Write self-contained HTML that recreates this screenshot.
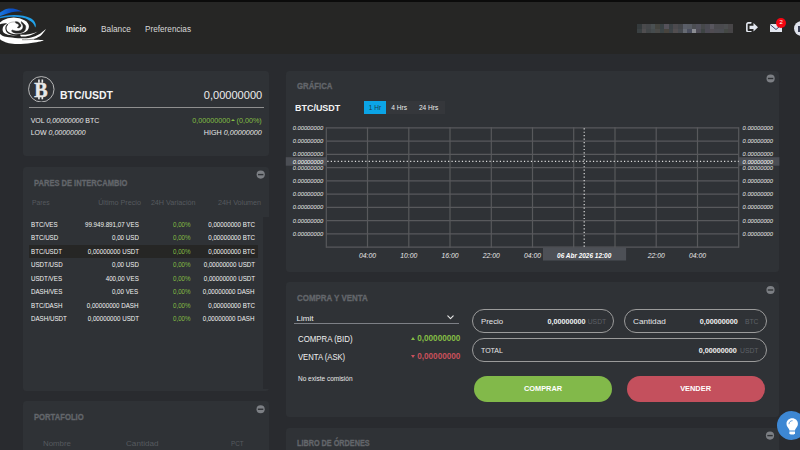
<!DOCTYPE html>
<html lang="es">
<head>
<meta charset="utf-8">
<title>Exchange</title>
<style>
*{box-sizing:border-box;margin:0;padding:0}
html,body{width:800px;height:450px;overflow:hidden;background:#292b2f}
body{position:relative;font-family:"Liberation Sans",sans-serif;color:#f0f0f0;-webkit-font-smoothing:antialiased}
.abs,.t{position:absolute}
.t{white-space:nowrap;line-height:10px;font-size:7px}
.topbar{left:0;top:0;width:800px;height:2px;background:#0b0b0b}
.header{left:0;top:2px;width:800px;height:52px;background:#262625}
.card{background:#2f3236;border-radius:3.5px}
.ttl{font-weight:bold;color:#63666b;font-size:8.8px;transform-origin:left center;-webkit-text-stroke:.3px #63666b}
.minus{width:8px;height:8px;border-radius:50%;background:#787b80;margin:0 0 0 -.2px}
.minus:after{content:"";position:absolute;left:1.3px;top:3.3px;width:5.4px;height:1.4px;background:#383b40}
.th{color:#565a5f;font-size:7.2px}
.row{font-size:6.9px;color:#f2f2f2;transform:scaleX(.9)}
.ol{transform-origin:left center}
.or{transform-origin:right center}
.pill{border:1px solid #9b9b9b;border-radius:12px}
.btn{border-radius:13px}
.g{color:#84be45}
.r{color:#c9505b}
.i{font-style:italic}
.b{font-weight:bold}
</style>
</head>
<body>
<div class="abs topbar"></div>
<div class="abs header"></div>


<!-- LOGO -->
<svg class="abs" style="left:0;top:4px" width="60" height="46" viewBox="0 0 60 46">
  <defs>
    <linearGradient id="gb1" x1="0" y1="0" x2="1" y2="0"><stop offset="0" stop-color="#1877e0"/><stop offset=".5" stop-color="#0b50c4"/><stop offset="1" stop-color="#0a48b8"/></linearGradient>
    <linearGradient id="gb2" x1="0" y1="0" x2="1" y2="0"><stop offset="0" stop-color="#1688dc"/><stop offset="1" stop-color="#22a6ee"/></linearGradient>
  </defs>
  <path d="M0 8.500 C1.500 7.300 2.600 6.700 3.600 6.200 C5.400 5.200 7 4.700 8.900 4.500 C11 4.300 13 4.400 15.100 4.900 C17.800 5.500 20.400 6.500 22.600 8 C20.800 7.600 19.300 7.500 17.800 7.500 C15.600 7.500 13.600 7.800 11.600 8.300 C9.400 8.800 7.300 9.500 5.300 10.300 C3.400 11 1.600 11.600 0 12.100 Z" fill="url(#gb1)"/>
  <path d="M0 12.700 C1.800 12.300 3.500 12 5.300 11.700 C8.200 11.200 11.200 10.900 14.200 10.900 C17.200 10.900 20.200 11.100 23.100 11.700 C25.700 12.200 28.100 12.900 30.200 14 C32.200 15 33.700 16.300 34.700 17.900 C35.500 19.200 35.900 20.600 35.800 22 C35.700 22.600 35.500 23.100 35.100 23.400 C34.900 22.500 34.600 21.700 34.200 20.900 C33.500 19.600 32.400 18.500 31.100 17.600 C29.500 16.500 27.700 15.300 25.800 14.500 C23.300 13.500 20.600 13.100 17.800 12.900 C14.800 12.700 11.800 12.700 8.900 12.900 C5.900 13.100 2.900 13.500 0 14.200 Z" fill="url(#gb2)"/>
  <ellipse cx="13.700" cy="22.500" rx="15.200" ry="8.900" fill="#fff"/>
  <path d="M-1.00 20.40 C0.28 20.23 5.90 19.17 6.70 19.40 C7.50 19.63 4.48 20.87 3.80 21.80 C3.12 22.73 2.67 23.92 2.60 25.00 C2.53 26.08 2.67 27.30 3.40 28.30 C4.13 29.30 5.23 30.28 7.00 31.00 C8.77 31.72 11.50 32.37 14.00 32.60 C16.50 32.83 19.25 32.80 22.00 32.40 C24.75 32.00 29.08 30.57 30.50 30.20 L30.60 30.60 C29.33 31.02 25.60 32.58 23.00 33.10 C20.40 33.62 17.50 33.70 15.00 33.70 C12.50 33.70 10.00 33.43 8.00 33.10 C6.00 32.77 4.50 32.35 3.00 31.70 C1.50 31.05 -0.33 30.32 -1.00 29.20 C-1.67 28.08 -1.00 26.47 -1.00 25.00 C-1.00 23.53 -1.00 21.17 -1.00 20.40 Z" fill="#262625"/>
  <path d="M21.30 17.50 C21.93 18.10 24.38 19.97 25.10 21.10 C25.82 22.23 25.82 23.20 25.60 24.30 C25.38 25.40 24.95 26.87 23.80 27.70 C22.65 28.53 20.35 29.13 18.70 29.30 C17.05 29.47 15.12 29.10 13.90 28.70 C12.68 28.30 11.82 27.20 11.40 26.90 L12.30 26.00 C12.92 26.17 14.67 26.93 16.00 27.00 C17.33 27.07 19.18 26.85 20.30 26.40 C21.42 25.95 22.27 25.10 22.70 24.30 C23.13 23.50 23.13 22.47 22.90 21.60 C22.67 20.73 21.57 19.52 21.30 19.10 Z" fill="#262625" stroke="#262625" stroke-width=".45" stroke-linejoin="round"/>
  <path d="M15.60 17.50 C16.12 17.65 17.83 17.85 18.70 18.40 C19.57 18.95 20.48 20.07 20.80 20.80 C21.12 21.53 20.92 22.28 20.60 22.80 C20.28 23.32 19.47 23.78 18.90 23.90 C18.33 24.02 17.48 23.57 17.20 23.50 L17.20 23.50 C17.37 23.37 17.92 23.02 18.20 22.70 C18.48 22.38 18.92 22.05 18.90 21.60 C18.88 21.15 18.65 20.45 18.10 20.00 C17.55 19.55 16.02 19.08 15.60 18.90 Z" fill="#262625" stroke="#262625" stroke-width=".45" stroke-linejoin="round"/>
  <path d="M7.400 20.600 C6.300 21.700 5.800 23 5.900 24.300 C6 25.500 6.300 26.600 6.900 27.500 C7.800 28.600 9.200 29.400 10.700 29.900 C12.400 30.500 14.200 30.800 16 30.800 C18.200 30.800 20.400 30.600 22.400 29.900 C24 29.400 25.500 28.800 26.700 28" fill="none" stroke="#262625" stroke-width="1.200" stroke-linecap="round"/>
  <path d="M15.600 18 C13.800 17.800 12.200 17.900 10.700 18.400 C9.300 18.900 8.200 19.700 7.400 20.600" fill="none" stroke="#262625" stroke-width=".5" stroke-opacity=".6"/>
  <path d="M0.00 30.00 C0.50 30.32 1.52 31.35 3.00 31.90 C4.48 32.45 6.90 32.97 8.90 33.30 C10.90 33.63 12.78 33.73 15.00 33.90 C17.22 34.07 19.52 34.38 22.20 34.30 C24.88 34.22 28.28 34.08 31.10 33.40 C33.92 32.72 36.57 31.65 39.10 30.20 C41.63 28.75 45.10 25.62 46.30 24.70 L46.30 24.70 C45.40 25.82 42.98 29.62 40.90 31.40 C38.82 33.18 34.45 34.68 33.80 35.40 C33.15 36.12 35.37 35.53 37.00 35.70 C38.63 35.87 44.58 35.85 43.60 36.40 C42.62 36.95 35.40 38.40 31.10 39.00 C26.80 39.60 21.50 39.97 17.80 40.00 C14.10 40.03 11.42 39.70 8.90 39.20 C6.38 38.70 4.18 37.67 2.70 37.00 C1.22 36.33 0.45 35.50 0.00 35.20 Z" fill="#fff"/>
  <path d="M20 30.800 C27 30.900 33 29.700 37.800 27.400 C33 31 27 32.600 21 32.600 Z" fill="#fff"/>
  <path d="M22 35.700 C28 35.900 35 35.300 38.500 34.600" fill="none" stroke="#262625" stroke-width=".5"/>
</svg>

<!-- HEADER RIGHT -->
<svg class="abs" style="left:637.2px;top:24.2px" width="95.7" height="9.2" viewBox="0 0 95.7 9.2" shape-rendering="crispEdges">
  <g><rect x="0.00" y="0.0" width="4.61" height="4.650" fill="#343a3c"/><rect x="4.56" y="0.0" width="4.61" height="4.650" fill="#4a4a4c"/><rect x="9.11" y="0.0" width="4.61" height="4.650" fill="#45474a"/><rect x="13.67" y="0.0" width="4.61" height="4.650" fill="#4a5052"/><rect x="18.23" y="0.0" width="4.61" height="4.650" fill="#44443f"/><rect x="22.79" y="0.0" width="4.61" height="4.650" fill="#3a4244"/><rect x="27.34" y="0.0" width="4.61" height="4.650" fill="#55525a"/><rect x="31.90" y="0.0" width="4.61" height="4.650" fill="#3c4246"/><rect x="36.46" y="0.0" width="4.61" height="4.650" fill="#4c4a4e"/><rect x="41.01" y="0.0" width="4.61" height="4.650" fill="#44464a"/><rect x="45.57" y="0.0" width="4.61" height="4.650" fill="#5a5e68"/><rect x="50.13" y="0.0" width="4.61" height="4.650" fill="#585c64"/><rect x="54.69" y="0.0" width="4.61" height="4.650" fill="#4c4e52"/><rect x="59.24" y="0.0" width="4.61" height="4.650" fill="#50505a"/><rect x="63.80" y="0.0" width="4.61" height="4.650" fill="#46484a"/><rect x="68.36" y="0.0" width="4.61" height="4.650" fill="#4a4a52"/><rect x="72.91" y="0.0" width="4.61" height="4.650" fill="#58565e"/><rect x="77.47" y="0.0" width="4.61" height="4.650" fill="#4a4a4e"/><rect x="82.03" y="0.0" width="4.61" height="4.650" fill="#4a4a4e"/><rect x="86.59" y="0.0" width="4.61" height="4.650" fill="#4c4e50"/><rect x="91.14" y="0.0" width="4.61" height="4.650" fill="#484648"/><rect x="0.00" y="4.6" width="4.61" height="4.650" fill="#3a4042"/><rect x="4.56" y="4.6" width="4.61" height="4.650" fill="#504e50"/><rect x="9.11" y="4.6" width="4.61" height="4.650" fill="#424648"/><rect x="13.67" y="4.6" width="4.61" height="4.650" fill="#464c4e"/><rect x="18.23" y="4.6" width="4.61" height="4.650" fill="#4a4a48"/><rect x="22.79" y="4.6" width="4.61" height="4.650" fill="#3c4446"/><rect x="27.34" y="4.6" width="4.61" height="4.650" fill="#48443e"/><rect x="31.90" y="4.6" width="4.61" height="4.650" fill="#3e4448"/><rect x="36.46" y="4.6" width="4.61" height="4.650" fill="#524e50"/><rect x="41.01" y="4.6" width="4.61" height="4.650" fill="#464a50"/><rect x="45.57" y="4.6" width="4.61" height="4.650" fill="#666a72"/><rect x="50.13" y="4.6" width="4.61" height="4.650" fill="#4a4e5e"/><rect x="54.69" y="4.6" width="4.61" height="4.650" fill="#8a8c92"/><rect x="59.24" y="4.6" width="4.61" height="4.650" fill="#4e4c56"/><rect x="63.80" y="4.6" width="4.61" height="4.650" fill="#3e4444"/><rect x="68.36" y="4.6" width="4.61" height="4.650" fill="#4c4a54"/><rect x="72.91" y="4.6" width="4.61" height="4.650" fill="#504c52"/><rect x="77.47" y="4.6" width="4.61" height="4.650" fill="#4c4c52"/><rect x="82.03" y="4.6" width="4.61" height="4.650" fill="#4a4c52"/><rect x="86.59" y="4.6" width="4.61" height="4.650" fill="#444844"/><rect x="91.14" y="4.6" width="4.61" height="4.650" fill="#464446"/></g>
</svg>
<svg class="abs" style="left:745.8px;top:21.9px" width="12.2" height="10.6" viewBox="0 0 12.200 10.600">
  <path d="M4.900 0.850 H2.300 C1.400 0.850 0.850 1.400 0.850 2.300 V8.300 C0.850 9.200 1.400 9.750 2.300 9.750 H4.900" fill="none" stroke="#e3e7ef" stroke-width="1.600" stroke-linecap="round"/>
  <path d="M3.500 3.700 H7.500 V1 L12 5.300 L7.500 9.600 V6.900 H3.500 Z" fill="#e3e7ef"/>
</svg>
<svg class="abs" style="left:769.6px;top:23.6px" width="12" height="8.8" viewBox="0 0 12 8.800">
  <rect x="0" y="0" width="12" height="8.800" rx="1" fill="#e3e7ef"/>
  <path d="M0.300 0.700 L6 5.500 L11.700 0.700" fill="none" stroke="#2a2f5a" stroke-width="0.900"/>
</svg>
<div class="abs" style="left:776.2px;top:18.100px;width:9.800px;height:9.800px;border-radius:50%;background:#f40612"></div>
<div class="t" style="left:776.2px;top:18.100px;width:9.800px;line-height:9.800px;text-align:center;font-size:6px;color:#fff">2</div>
<div class="abs" style="left:794.2px;top:20.700px;width:15px;height:15px;border-radius:50%;background:#dfe3ec"></div>
<div class="abs" style="left:798.4px;top:25.500px;width:3px;height:6px;background:#3a3f55"></div>

<!-- NAV -->
<div class="t b ol" style="left:65.5px;top:23.8px;font-size:8.3px;color:#e4e4e4;transform:scaleX(.94)">Inicio</div>
<div class="t ol" style="left:101px;top:23.8px;font-size:8.3px;color:#d8d8d8">Balance</div>
<div class="t ol" style="left:144.5px;top:23.8px;font-size:8.3px;color:#d8d8d8;transform:scaleX(.988)">Preferencias</div>

<!-- CARDS -->
<div class="abs card" id="c1" style="left:22.5px;top:70.9px;width:246.5px;height:85px"></div>
<div class="abs card" id="c2" style="left:22.5px;top:167.3px;width:246.5px;height:223.5px"></div>
<div class="abs card" id="c3" style="left:22.5px;top:401px;width:246.5px;height:60px"></div>
<div class="abs card" id="c4" style="left:285.8px;top:70.9px;width:493.6px;height:201.6px"></div>
<div class="abs card" id="c5" style="left:285.8px;top:282.3px;width:493.6px;height:134.6px"></div>
<div class="abs card" id="c6" style="left:285.8px;top:427.6px;width:493.6px;height:40px"></div>


<!-- CARD 1: BTC/USDT -->
<svg class="abs" style="left:28.300px;top:75.900px" width="26.600" height="26.600" viewBox="0 0 26 26">
  <circle cx="13" cy="13" r="12.450" fill="none" stroke="#d4d4d4" stroke-width="0.800"/>
  <text x="12.600" y="20.300" text-anchor="middle" font-family="Liberation Serif, serif" font-weight="bold" font-size="19.500" fill="#e8e8e8" stroke="#e8e8e8" stroke-width=".5">B</text>
  <rect x="9.900" y="3.400" width="1.600" height="3.200" fill="#e8e8e8"/><rect x="13.200" y="3.400" width="1.600" height="3.200" fill="#e8e8e8"/>
  <rect x="9.900" y="19.800" width="1.600" height="3" fill="#e8e8e8"/><rect x="13.200" y="19.800" width="1.600" height="3" fill="#e8e8e8"/>
</svg>
<div class="t b" style="left:60.100px;top:88.800px;line-height:12px;font-size:11.200px;color:#f4f4f4;transform:scaleX(.937);transform-origin:left center">BTC/USDT</div>
<div class="t" style="right:538px;top:88.800px;line-height:12px;font-size:11.400px;color:#ececec;transform:scaleX(.97);transform-origin:right center">0,00000000</div>
<div class="abs" style="left:28.800px;top:107.300px;width:235px;height:1px;background:#8f8f8f"></div>
<div class="t" style="left:30.700px;top:115.800px;font-size:7px;color:#e8e8e8">VOL <span class="i">0,00000000</span> BTC</div>
<div class="t" style="left:30.700px;top:127.500px;font-size:7px;color:#e8e8e8">LOW <span class="i">0,00000000</span></div>
<div class="t g" style="right:538.300px;top:115.800px;font-size:7.200px">0,00000000<span style="display:inline-block;width:6.400px"></span>(0,00%)</div>
<div class="abs" style="left:231.400px;top:119.300px;border-left:2.200px solid transparent;border-right:2.200px solid transparent;border-bottom:2.800px solid #84be45"></div>
<div class="t" style="right:538.300px;top:127.500px;font-size:7.200px;color:#e8e8e8">HIGH <span class="i">0,00000000</span></div>

<!-- CARD 2: PARES -->
<div class="t ttl" style="left:34px;top:177.500px;transform:scaleX(0.858)">PARES DE INTERCAMBIO</div>
<div class="abs" style="left:263.400px;top:217px;width:5.600px;height:172px;background:#292b2f"></div>
<div class="t th ol" style="left:31.700px;top:197.800px;transform:scaleX(.935)">Pares</div>
<div class="t th" style="right:659.100px;top:197.800px">Último Precio</div>
<div class="t th" style="right:604.500px;top:197.800px">24H Variación</div>
<div class="t th" style="right:538.900px;top:197.800px">24H Volumen</div>
<div class="abs" style="left:28.800px;top:244.500px;width:229.200px;height:13px;background:#262625"></div>
<div class="t row ol" style="left:31.400px;top:219.7px">BTC/VES</div><div class="t row or" style="right:661.400px;top:219.7px">99.949.891,07 VES</div><div class="t row g ol" style="left:173.400px;top:219.7px">0,00%</div><div class="t row or" style="right:545.400px;top:219.7px">0,00000000 BTC</div>
<div class="t row ol" style="left:31.400px;top:233.2px">BTC/USD</div><div class="t row or" style="right:661.400px;top:233.2px">0,00 USD</div><div class="t row g ol" style="left:173.400px;top:233.2px">0,00%</div><div class="t row or" style="right:545.400px;top:233.2px">0,00000000 BTC</div>
<div class="t row ol" style="left:31.400px;top:246.7px">BTC/USDT</div><div class="t row or" style="right:661.400px;top:246.7px">0,00000000 USDT</div><div class="t row g ol" style="left:173.400px;top:246.7px">0,00%</div><div class="t row or" style="right:545.400px;top:246.7px">0,00000000 BTC</div>
<div class="t row ol" style="left:31.400px;top:260.2px">USDT/USD</div><div class="t row or" style="right:661.400px;top:260.2px">0,00 USD</div><div class="t row g ol" style="left:173.400px;top:260.2px">0,00%</div><div class="t row or" style="right:545.400px;top:260.2px">0,00000000 USDT</div>
<div class="t row ol" style="left:31.400px;top:273.7px">USDT/VES</div><div class="t row or" style="right:661.400px;top:273.7px">400,00 VES</div><div class="t row g ol" style="left:173.400px;top:273.7px">0,00%</div><div class="t row or" style="right:545.400px;top:273.7px">0,00000000 USDT</div>
<div class="t row ol" style="left:31.400px;top:287.2px">DASH/VES</div><div class="t row or" style="right:661.400px;top:287.2px">0,00 VES</div><div class="t row g ol" style="left:173.400px;top:287.2px">0,00%</div><div class="t row or" style="right:545.400px;top:287.2px">0,00000000 DASH</div>
<div class="t row ol" style="left:31.400px;top:300.7px">BTC/DASH</div><div class="t row or" style="right:661.400px;top:300.7px">0,00000000 DASH</div><div class="t row g ol" style="left:173.400px;top:300.7px">0,00%</div><div class="t row or" style="right:545.400px;top:300.7px">0,00000000 BTC</div>
<div class="t row ol" style="left:31.400px;top:314.2px">DASH/USDT</div><div class="t row or" style="right:661.400px;top:314.2px">0,00000000 USDT</div><div class="t row g ol" style="left:173.400px;top:314.2px">0,00%</div><div class="t row or" style="right:545.400px;top:314.2px">0,00000000 DASH</div>

<!-- CARD 3: PORTAFOLIO -->
<div class="t ttl" style="left:33.8px;top:411.600px;transform:scaleX(0.872)">PORTAFOLIO</div>
<div class="t th ol" style="left:42.500px;top:438.500px;transform:scaleX(1.094)">Nombre</div>
<div class="t th ol" style="left:125.900px;top:438.500px;transform:scaleX(1.13)">Cantidad</div>
<div class="t th ol" style="left:231.200px;top:438.500px;transform:scaleX(.875)">PCT</div>


<!-- CARD 4: GRAFICA -->
<div class="t ttl" style="left:296.5px;top:80.800px;transform:scaleX(0.885)">GRÁFICA</div>
<div class="t b" style="left:295.400px;top:101.700px;line-height:12px;font-size:9.400px;color:#f4f4f4;transform:scaleX(.955);transform-origin:left center">BTC/USDT</div>
<div class="abs" style="left:363.900px;top:100.900px;width:80.900px;height:13.400px;background:#35373b"></div>
<div class="abs" style="left:363.900px;top:100.900px;width:22.100px;height:13.400px;background:#0ba4e6"></div>
<div class="t" style="left:363.900px;top:102.600px;width:22.100px;text-align:center;font-size:6.600px;color:#1d3c4c">1 Hr</div>
<div class="t" style="left:386px;top:102.600px;width:26.500px;text-align:center;font-size:6.600px;color:#ececec">4 Hrs</div>
<div class="t" style="left:412.500px;top:102.600px;width:32.300px;text-align:center;font-size:6.600px;color:#ececec">24 Hrs</div>
<svg class="abs" style="left:0;top:0" width="800" height="450" viewBox="0 0 800 450">
<rect x="285.800" y="157.200" width="40.5" height="8.500" fill="#4b4e54"/>
<rect x="738.7" y="157.200" width="40.7" height="8.500" fill="#4b4e54"/>
<g stroke="#58595c" stroke-width="1.200" fill="none">
<line x1="326.3" y1="127.3" x2="326.3" y2="247.7"/><line x1="367.5" y1="127.3" x2="367.5" y2="247.7"/><line x1="408.8" y1="127.3" x2="408.8" y2="247.7"/><line x1="450.0" y1="127.3" x2="450.0" y2="247.7"/><line x1="491.3" y1="127.3" x2="491.3" y2="247.7"/><line x1="532.5" y1="127.3" x2="532.5" y2="247.7"/><line x1="573.7" y1="127.3" x2="573.7" y2="247.7"/><line x1="615.0" y1="127.3" x2="615.0" y2="247.7"/><line x1="656.2" y1="127.3" x2="656.2" y2="247.7"/><line x1="697.5" y1="127.3" x2="697.5" y2="247.7"/><line x1="738.7" y1="127.3" x2="738.7" y2="247.7"/>
<line x1="326.3" y1="127.9" x2="738.7" y2="127.9"/><line x1="326.3" y1="141.1" x2="738.7" y2="141.1"/><line x1="326.3" y1="154.4" x2="738.7" y2="154.4"/><line x1="326.3" y1="167.6" x2="738.7" y2="167.6"/><line x1="326.3" y1="180.9" x2="738.7" y2="180.9"/><line x1="326.3" y1="194.1" x2="738.7" y2="194.1"/><line x1="326.3" y1="207.4" x2="738.7" y2="207.4"/><line x1="326.3" y1="220.6" x2="738.7" y2="220.6"/><line x1="326.3" y1="233.9" x2="738.7" y2="233.9"/><line x1="326.3" y1="247.1" x2="738.7" y2="247.1"/>
</g>
<line x1="327.3" y1="161.400" x2="738.7" y2="161.400" stroke="#dcdcdc" stroke-width="1.200" stroke-dasharray="1.200 2.250"/>
<line x1="584.200" y1="128.2" x2="584.200" y2="246.9" stroke="#dcdcdc" stroke-width="1.200" stroke-dasharray="1.200 2.250"/>
<rect x="543" y="247.600" width="83.100" height="12.900" fill="#4d5056"/>
<g font-family="Liberation Sans, sans-serif" font-style="italic" font-size="5.750" fill="#e9e9e9">
<text x="323.100" y="129.9" text-anchor="end">0.00000000</text><text x="742.600" y="129.9">0.00000000</text>
<text x="323.100" y="143.1" text-anchor="end">0.00000000</text><text x="742.600" y="143.1">0.00000000</text>
<text x="323.100" y="156.4" text-anchor="end">0.00000000</text><text x="742.600" y="156.4">0.00000000</text>
<text x="323.100" y="169.6" text-anchor="end">0.00000000</text><text x="742.600" y="169.6">0.00000000</text>
<text x="323.100" y="182.9" text-anchor="end">0.00000000</text><text x="742.600" y="182.9">0.00000000</text>
<text x="323.100" y="196.1" text-anchor="end">0.00000000</text><text x="742.600" y="196.1">0.00000000</text>
<text x="323.100" y="209.4" text-anchor="end">0.00000000</text><text x="742.600" y="209.4">0.00000000</text>
<text x="323.100" y="222.6" text-anchor="end">0.00000000</text><text x="742.600" y="222.6">0.00000000</text>
<text x="323.100" y="235.9" text-anchor="end">0.00000000</text><text x="742.600" y="235.9">0.00000000</text>
<text x="323.100" y="163.600" text-anchor="end" fill="#fff">0.00000000</text><text x="742.600" y="163.600" fill="#fff">0.00000000</text>
<text x="367.5" y="257.600" text-anchor="middle" font-size="6.800">04:00</text><text x="408.8" y="257.600" text-anchor="middle" font-size="6.800">10:00</text><text x="450.0" y="257.600" text-anchor="middle" font-size="6.800">16:00</text><text x="491.3" y="257.600" text-anchor="middle" font-size="6.800">22:00</text><text x="532.5" y="257.600" text-anchor="middle" font-size="6.800">04:00</text><text x="656.2" y="257.600" text-anchor="middle" font-size="6.800">22:00</text><text x="697.5" y="257.600" text-anchor="middle" font-size="6.800">04:00</text>
<text x="584.200" y="257.600" text-anchor="middle" font-size="6.450" font-weight="bold" fill="#fff">06 Abr 2026 12:00</text>
</g>
<g><circle cx="260.7" cy="174.6" r="4.100" fill="#7c7f84"/><rect x="258.00" y="173.90" width="5.400" height="1.400" fill="#2f3236"/><circle cx="260.6" cy="409.25" r="4.100" fill="#7c7f84"/><rect x="257.90" y="408.55" width="5.400" height="1.400" fill="#2f3236"/><circle cx="770.6" cy="78.5" r="4.100" fill="#7c7f84"/><rect x="767.90" y="77.80" width="5.400" height="1.400" fill="#2f3236"/><circle cx="770.5" cy="290" r="4.100" fill="#7c7f84"/><rect x="767.80" y="289.30" width="5.400" height="1.400" fill="#2f3236"/><circle cx="770" cy="435.6" r="4.100" fill="#7c7f84"/><rect x="767.30" y="434.90" width="5.400" height="1.400" fill="#2f3236"/></g>
</svg>


<!-- CARD 5: COMPRA Y VENTA -->
<div class="t ttl" style="left:296.5px;top:292.700px;transform:scaleX(0.902)">COMPRA Y VENTA</div>
<div class="t" style="left:296.500px;top:313.600px;font-size:8px;color:#f0f0f0">Limit</div>
<div class="abs" style="left:294.400px;top:322.900px;width:164.400px;height:1px;background:#7d8086"></div>
<svg class="abs" style="left:446.500px;top:314.800px" width="7" height="5" viewBox="0 0 7 5"><path d="M0.800 0.900 L3.500 3.700 L6.200 0.900" fill="none" stroke="#e8e8e8" stroke-width="1.100" stroke-linecap="round" stroke-linejoin="round"/></svg>
<div class="t ol" style="left:298px;top:333px;line-height:12px;font-size:9.300px;color:#f0f0f0;transform:scaleX(.845)">COMPRA (BID)</div>
<div class="t ol" style="left:298px;top:350.800px;line-height:12px;font-size:9.300px;color:#f0f0f0;transform:scaleX(.825)">VENTA (ASK)</div>
<div class="t g b" style="right:339.600px;top:333px;line-height:12px;font-size:8.200px">0,00000000</div>
<div class="abs" style="left:410.700px;top:336.900px;border-left:2.600px solid transparent;border-right:2.600px solid transparent;border-bottom:3.500px solid #84be45"></div>
<div class="t r b" style="right:339.600px;top:350.700px;line-height:12px;font-size:8.200px">0,00000000</div>
<div class="abs" style="left:410.700px;top:354.500px;border-left:2.600px solid transparent;border-right:2.600px solid transparent;border-top:3.500px solid #c9505b"></div>
<div class="t" style="left:298px;top:373.700px;font-size:6.500px;color:#eaeaea">No existe comisión</div>

<div class="abs pill" style="left:472px;top:309.400px;width:142px;height:23.200px"></div>
<div class="abs pill" style="left:624px;top:309.400px;width:142.500px;height:23.200px"></div>
<div class="abs pill" style="left:472px;top:338px;width:294.500px;height:23.500px"></div>
<div class="t" style="left:481px;top:316.600px;font-size:7.800px;color:#e6e6e6">Precio</div>
<div class="t b" style="right:214.600px;top:316.600px;font-size:7.200px;color:#f2f2f2">0,00000000</div>
<div class="t" style="right:193.800px;top:316.600px;font-size:6.800px;color:#5e6166">USDT</div>
<div class="t ol" style="left:633px;top:316.600px;font-size:7.800px;color:#e6e6e6;transform:scaleX(1.05)">Cantidad</div>
<div class="t b" style="right:62.300px;top:316.600px;font-size:7.200px;color:#f2f2f2">0,00000000</div>
<div class="t" style="right:41.500px;top:316.600px;font-size:6.800px;color:#5e6166">BTC</div>
<div class="t" style="left:481px;top:345.500px;font-size:7px;color:#e6e6e6">TOTAL</div>
<div class="t b" style="right:63.200px;top:345.500px;font-size:7.200px;color:#f2f2f2">0,00000000</div>
<div class="t" style="right:41.500px;top:345.500px;font-size:6.800px;color:#5e6166">USDT</div>
<div class="abs btn" style="left:474px;top:376.200px;width:138px;height:25.600px;background:#82b94a"></div>
<div class="abs btn" style="left:627px;top:376.200px;width:137.800px;height:25.600px;background:#c4505d"></div>
<div class="t b" style="left:474px;top:383.800px;width:138px;text-align:center;font-size:7.400px;color:#fff">COMPRAR</div>
<div class="t b" style="left:626.400px;top:383.800px;width:138.400px;text-align:center;font-size:7.400px;color:#fff">VENDER</div>

<!-- CARD 6: LIBRO -->
<div class="t ttl" style="left:296.7px;top:438px;transform:scaleX(0.825)">LIBRO DE ÓRDENES</div>

<!-- HELP BULB -->
<div class="abs" style="left:777.300px;top:410.900px;width:29px;height:29px;border-radius:50%;background:#3d87d3"></div>
<svg class="abs" style="left:785.500px;top:418px" width="12.500" height="17" viewBox="0 0 12.500 17">
  <path d="M6.200 0.300 C9.500 0.300 11.900 2.700 11.900 5.800 C11.900 7.800 10.900 9.200 10 10.300 C9.400 11.100 9.100 11.700 9 12.600 L3.400 12.600 C3.300 11.700 3 11.100 2.400 10.300 C1.500 9.200 0.500 7.800 0.500 5.800 C0.500 2.700 2.900 0.300 6.200 0.300 Z" fill="#fff"/>
  <path d="M3.400 13.400 H9 V15.200 L7.900 16.600 H4.500 L3.400 15.200 Z" fill="#fff"/>
  <path d="M3 5.800 C3 4 4.400 2.700 6.200 2.700" fill="none" stroke="#3d87d3" stroke-width="0.800" stroke-linecap="round"/>
</svg>

</body>
</html>
